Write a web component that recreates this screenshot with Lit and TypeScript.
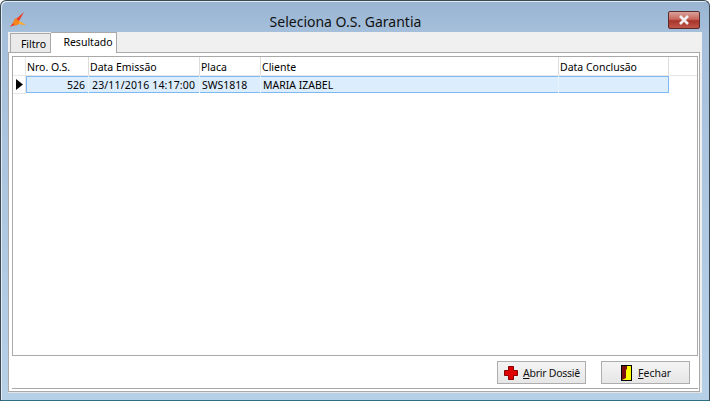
import { LitElement, html, css } from "lit";
import { customElement } from "lit/decorators.js";

const COLS = [
  { label: "Nro. O.S.", w: 63, value: "526", cls: "r" },
  { label: "Data Emissão", w: 111, value: "23/11/2016 14:17:00", cls: "num" },
  { label: "Placa", w: 61, value: "SWS1818", cls: "" },
  { label: "Cliente", w: 298, value: "MARIA IZABEL", cls: "" },
  { label: "Data Conclusão", w: 110, value: "", cls: "" },
];

@customElement("app-root")
export class AppRoot extends LitElement {
  static styles = css`
    :host {
      display: block;
      width: 710px;
      height: 401px;
      font-family: "Noto Sans", Tahoma, sans-serif;
      font-size: 10.5px;
      color: #000;
      overflow: hidden;
    }
    .window {
      box-sizing: border-box;
      width: 710px;
      height: 401px;
      background: linear-gradient(180deg, #98b4d0 0, #a6c0dc 32px, #b6d0e8 100%);
      border: 1px solid #3c4a55;
      border-bottom-color: #2f6f84;
      border-radius: 6px 6px 0 0;
      box-shadow: inset 1px 1px 0 #e2eaf2;
      display: flex;
      flex-direction: column;
      padding: 0 7px 7px 7px;
    }
    .titlebar {
      height: 31px;
      flex: none;
      display: flex;
      align-items: flex-start;
      position: relative;
    }
    .logo { margin: 11px 0 0 2px; }
    .title {
      position: absolute;
      left: 0;
      right: 19px;
      top: 11px;
      text-align: center;
      font-size: 14px;
      line-height: 20px;
      color: #111;
    }
    .close {
      position: absolute;
      right: 2px;
      top: 10px;
      box-sizing: border-box;
      width: 32px;
      height: 18px;
      border: 1px solid #5b2a2a;
      border-radius: 2px;
      background: linear-gradient(180deg, #d9a19a 0, #c8665c 45%, #a8342a 55%, #c0564a 100%);
      display: flex;
      align-items: center;
      justify-content: center;
    }
    .client {
      flex: 1;
      min-height: 0;
      background: #f0f0f0;
      display: flex;
      flex-direction: column;
      padding-right: 2px;
      border-bottom: 1px solid #e4e4e4;
    }
    .tabs {
      flex: none;
      height: 21px;
      display: flex;
      align-items: flex-end;
      padding-left: 2px;
      position: relative;
      z-index: 1;
      margin-bottom: -1px;
    }
    .tab {
      box-sizing: border-box;
      border: 1px solid #a9a9a9;
      background: #eaeaea;
      height: 20px;
      width: 41px;
      padding-left: 6px;
      text-align: center;
      line-height: 21px;
    }
    .tab.active {
      width: 66px;
      height: 21px;
      background: #fff;
      line-height: 19px;
      border-left: none;
      border-bottom: none;
      padding-left: 9px;
    }
    .panel {
      flex: 1;
      min-height: 0;
      box-sizing: border-box;
      background: #fff;
      border: 1px solid #a9a9a9;
      padding: 3px 1px 2px 3px;
      display: flex;
      flex-direction: column;
    }
    .grid {
      flex: 1;
      min-height: 0;
      border: 1px solid #a9a9a9;
      background: #fff;
      box-sizing: border-box;
    }
    .hrow, .drow { display: flex; }
    .hrow { height: 19px; box-sizing: border-box; border-bottom: 1px solid #e6e6e6; }
    .drow { height: 18px; box-sizing: border-box; }
    .ind {
      flex: none;
      width: 13px;
      box-sizing: border-box;
      border-right: 1px solid #e6e6e6;
      padding-left: 1px;
      display: flex;
      align-items: center;
      justify-content: center;
    }
    .drow .ind { border-bottom: 1px solid #e6e6e6; }
    .hcell {
      box-sizing: border-box;
      flex: none;
      border-right: 1px solid #dcdcdc;
      padding-left: 1px;
      line-height: 20px;
      white-space: nowrap;
      overflow: hidden;
    }
    .dcells {
      display: flex;
      flex: none;
      height: 17px;
      box-sizing: border-box;
      box-shadow: inset 0 0 0 1px #7db8f0;
      background: #dcedfd;
    }
    .dcell {
      box-sizing: border-box;
      flex: none;
      border-right: 1px solid #e8f2fb;
      padding-left: 2px;
      line-height: 18px;
      white-space: nowrap;
      overflow: hidden;
    }
    .dcell.r { text-align: right; padding: 0 3px 0 0; }
    .dcell.num { padding-left: 3px; letter-spacing: 0.15px; }
    .dcell:last-child { border-right: none; }
    .footer {
      flex: none;
      height: 33px;
      box-sizing: border-box;
      border-bottom: 1px solid #a9a9a9;
      display: flex;
      justify-content: flex-end;
      gap: 15px;
      padding: 5px 8px 0 0;
    }
    .btn {
      box-sizing: border-box;
      width: 89px;
      height: 23px;
      border: 1px solid #adadad;
      background: linear-gradient(180deg, #f4f4f4, #e6e6e6);
      display: flex;
      align-items: center;
      color: #111;
    }
    .b1 { padding-left: 6px; gap: 5px; letter-spacing: -0.25px; }
    .b2 { padding-left: 19px; gap: 6px; }
  `;

  render() {
    const total = COLS.reduce((s, c) => s + c.w, 0);
    return html`
      <div class="window">
        <div class="titlebar">
          <svg class="logo" width="17" height="16" viewBox="0 0 17 16">
            <path d="M0 15 L5 8 L14 0 L9 9 L5 13 Z" fill="#ee3d22"></path>
            <path d="M3 11 L5 6 L9 9 L16 13 L9 12 L5 14 Z" fill="#f5851f"></path>
            <path d="M9 9 L16 13 L9 12 Z" fill="#f9b233"></path>
          </svg>
          <div class="title">Seleciona O.S. Garantia</div>
          <div class="close">
            <svg width="12" height="10" viewBox="0 0 12 10">
              <path d="M2 1 L10 9 M10 1 L2 9" stroke="#f0f0f0" stroke-width="2.6" fill="none"></path>
            </svg>
          </div>
        </div>
        <div class="client">
          <div class="tabs">
            <div class="tab">Filtro</div>
            <div class="tab active">Resultado</div>
          </div>
          <div class="panel">
            <div class="grid">
              <div class="hrow">
                <div class="ind"></div>
                ${COLS.map((c) => html`<div class="hcell" style="width:${c.w}px">${c.label}</div>`)}
              </div>
              <div class="drow">
                <div class="ind">
                  <svg width="7" height="11" viewBox="0 0 7 11"><path d="M0 0 L7 5.5 L0 11 Z" fill="#000"></path></svg>
                </div>
                <div class="dcells" style="width:${total}px">
                  ${COLS.map((c) => html`<div class="dcell ${c.cls}" style="width:${c.w}px">${c.value}</div>`)}
                </div>
              </div>
            </div>
            <div class="footer">
              <div class="btn b1">
                <svg width="14" height="14" viewBox="0 0 14 14">
                  <path d="M4.5 0.5 H9.5 V4.5 H13.5 V9.5 H9.5 V13.5 H4.5 V9.5 H0.5 V4.5 H4.5 Z" fill="#e00000" stroke="#8a0000"></path>
                </svg>
                <span><u>A</u>brir Dossiê</span>
              </div>
              <div class="btn b2">
                <svg width="11" height="16" viewBox="0 0 11 16">
                  <rect x="0.5" y="0.5" width="10" height="15" fill="#ffff00" stroke="#000"></rect>
                  <path d="M1 1 H6 V4 L5 5 V13 L1 15 Z" fill="#7a1010"></path>
                </svg>
                <span><u>F</u>echar</span>
              </div>
            </div>
          </div>
        </div>
      </div>
    `;
  }
}
